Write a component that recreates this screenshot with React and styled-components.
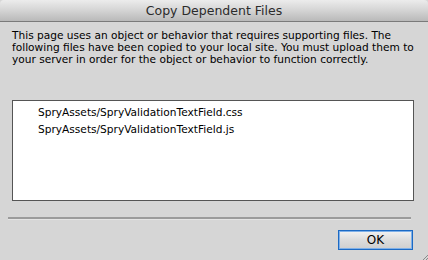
import React from "react";
import styled, { createGlobalStyle } from "styled-components";

const Global = createGlobalStyle`
  html, body { margin: 0; padding: 0; background: #d6d6d6; }
  body { font-family: "DejaVu Sans", "Liberation Sans", sans-serif; }
`;

const Dialog = styled.div`
  position: relative;
  width: 428px;
  height: 260px;
  background: #d6d6d6;
  display: flex;
  flex-direction: column;
  overflow: hidden;
`;

const TitleBar = styled.div`
  height: 21px;
  border-bottom: 1px solid #7a7a7a;
  border-radius: 4px 4px 0 0;
  background: linear-gradient(#ececec, #d4d4d4 50%, #b9b9b9);
  display: flex;
  align-items: center;
  justify-content: center;
  font-size: 12.5px;
  color: #2b2b2b;
`;

const Message = styled.p`
  margin: 7px 0 0 12px;
  font-size: 10.6px;
  line-height: 12px;
  color: #000;
`;

const FileList = styled.ul`
  list-style: none;
  margin: 35px 14px 0 12px;
  padding: 3px 0 0 25px;
  height: 96px;
  background: #fff;
  border: 1px solid #555;
`;

const FileItem = styled.li`
  font-size: 10.6px;
  line-height: 17px;
  color: #000;
`;

const Separator = styled.hr`
  margin: 16px 17px 0 8px;
  height: 0;
  border: 0;
  border-top: 2px solid #9b9b9b;
  border-bottom: 1px solid #e4e4e4;
`;

const Footer = styled.div`
  display: flex;
  justify-content: flex-end;
  padding: 10px 15px 0 0;
`;

const Button = styled.button`
  width: 75px;
  height: 20px;
  border: 1px solid #1c6ac4;
  box-shadow: inset 0 0 0 1px #7fb0e8;
  background: linear-gradient(#f2f2f2, #dcdcdc 50%, #cfcfcf);
  font-family: "DejaVu Sans", "Liberation Sans", sans-serif;
  font-size: 12px;
  color: #000;
  padding: 0;
`;

const Grip = styled.svg`
  position: absolute;
  right: 0;
  bottom: 0;
`;

export default function App() {
  return (
    <Dialog>
      <Global />
      <TitleBar>Copy Dependent Files</TitleBar>
      <Message>
        This page uses an object or behavior that requires supporting files. The
        following files have been copied to your local site. You must upload them to
        your server in order for the object or behavior to function correctly.
      </Message>
      <FileList>
        <FileItem>SpryAssets/SpryValidationTextField.css</FileItem>
        <FileItem>SpryAssets/SpryValidationTextField.js</FileItem>
      </FileList>
      <Separator />
      <Footer>
        <Button>OK</Button>
      </Footer>
      <Grip width="6" height="6" viewBox="0 0 6 6">
        <path d="M6 1 L1 6 M6 4 L4 6" stroke="#8a8a8a" strokeWidth="1" />
      </Grip>
    </Dialog>
  );
}
